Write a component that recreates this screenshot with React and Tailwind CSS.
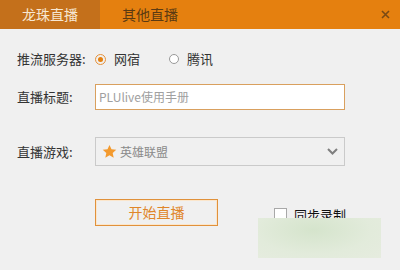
import React from "react";

export default function App() {
  const font = { fontFamily: '"Microsoft YaHei", "Noto Sans CJK SC", "Noto Sans", sans-serif' };
  return (
    <div className="w-[400px] h-[270px] bg-[#f0f0f0] relative overflow-hidden" style={font}>
      <div className="h-[29px] bg-[#e5800f] flex items-stretch">
        <div className="w-[100px] bg-[#c4701b] text-[#f7e7d2] text-[14px] flex items-center justify-center">龙珠直播</div>
        <div className="w-[100px] text-[#5b3a12] text-[14px] flex items-center justify-center">其他直播</div>
        <div className="flex-1" />
        <div className="w-[30px] flex items-center justify-center text-[#7a4a10]">
          <svg width="9" height="9" viewBox="0 0 9 9"><path d="M1 1L8 8M8 1L1 8" stroke="#7a4a14" strokeWidth="1.6" /></svg>
        </div>
      </div>
      <div className="pl-[17px] text-[13px] text-[#333]">
        <div className="h-[20px] mt-[20px] flex items-center">
          <span className="w-[78px]">推流服务器:</span>
          <span className="w-[11px] h-[11px] rounded-full border border-[#e5913a] flex items-center justify-center">
            <span className="w-[5px] h-[5px] rounded-full bg-[#e5800f]" />
          </span>
          <span className="ml-[8px] w-[55px]">网宿</span>
          <span className="w-[10px] h-[10px] rounded-full border border-[#999] bg-white" />
          <span className="ml-[8px]">腾讯</span>
        </div>
        <div className="flex items-center mt-[15px]">
          <span className="w-[78px]">直播标题:</span>
          <div className="w-[250px] h-[26px] border border-[#d9a05e] bg-white flex items-center pl-[3px] text-[12px] text-[#a0a0a0]">PLUlive使用手册</div>
        </div>
        <div className="flex items-center mt-[27px]">
          <span className="w-[78px]">直播游戏:</span>
          <div className="w-[250px] h-[29px] border border-[#cacaca] flex items-center pl-[6px] text-[12px] text-[#8a8a8a]">
            <svg width="15" height="15" viewBox="0 0 24 24"><path d="M12 1.5l3.2 7 7.6.8-5.7 5.2 1.6 7.5L12 18.1l-6.7 3.9 1.6-7.5L1.2 9.3l7.6-.8z" fill="#f39a2e" /></svg>
            <span className="ml-[3px]">英雄联盟</span>
            <div className="flex-1" />
            <svg className="mr-[6px]" width="11" height="7" viewBox="0 0 11 7"><path d="M1 1l4.5 4.5L10 1" stroke="#7f7f7f" strokeWidth="2" fill="none" /></svg>
          </div>
        </div>
        <div className="flex items-start mt-[33px]">
          <div className="ml-[78px] w-[123px] h-[27px] border border-[#e0913b] shadow-[inset_0_0_0_1px_#fbe6cc] flex items-center justify-center text-[#e0862a] text-[14px]">开始直播</div>
          <div className="ml-[56px] mt-[6px] flex items-center">
            <span className="w-[13px] h-[13px] border border-[#a8a8a8] bg-white" />
            <span className="ml-[7px] text-[#111]">同步录制</span>
          </div>
        </div>
      </div>
      <div className="absolute left-[258px] top-[218px] w-[123px] h-[40px] bg-[radial-gradient(ellipse_at_45%_30%,#d5e4cc,#e2ebdb_60%,#e6ecdf)]" />
    </div>
  );
}
